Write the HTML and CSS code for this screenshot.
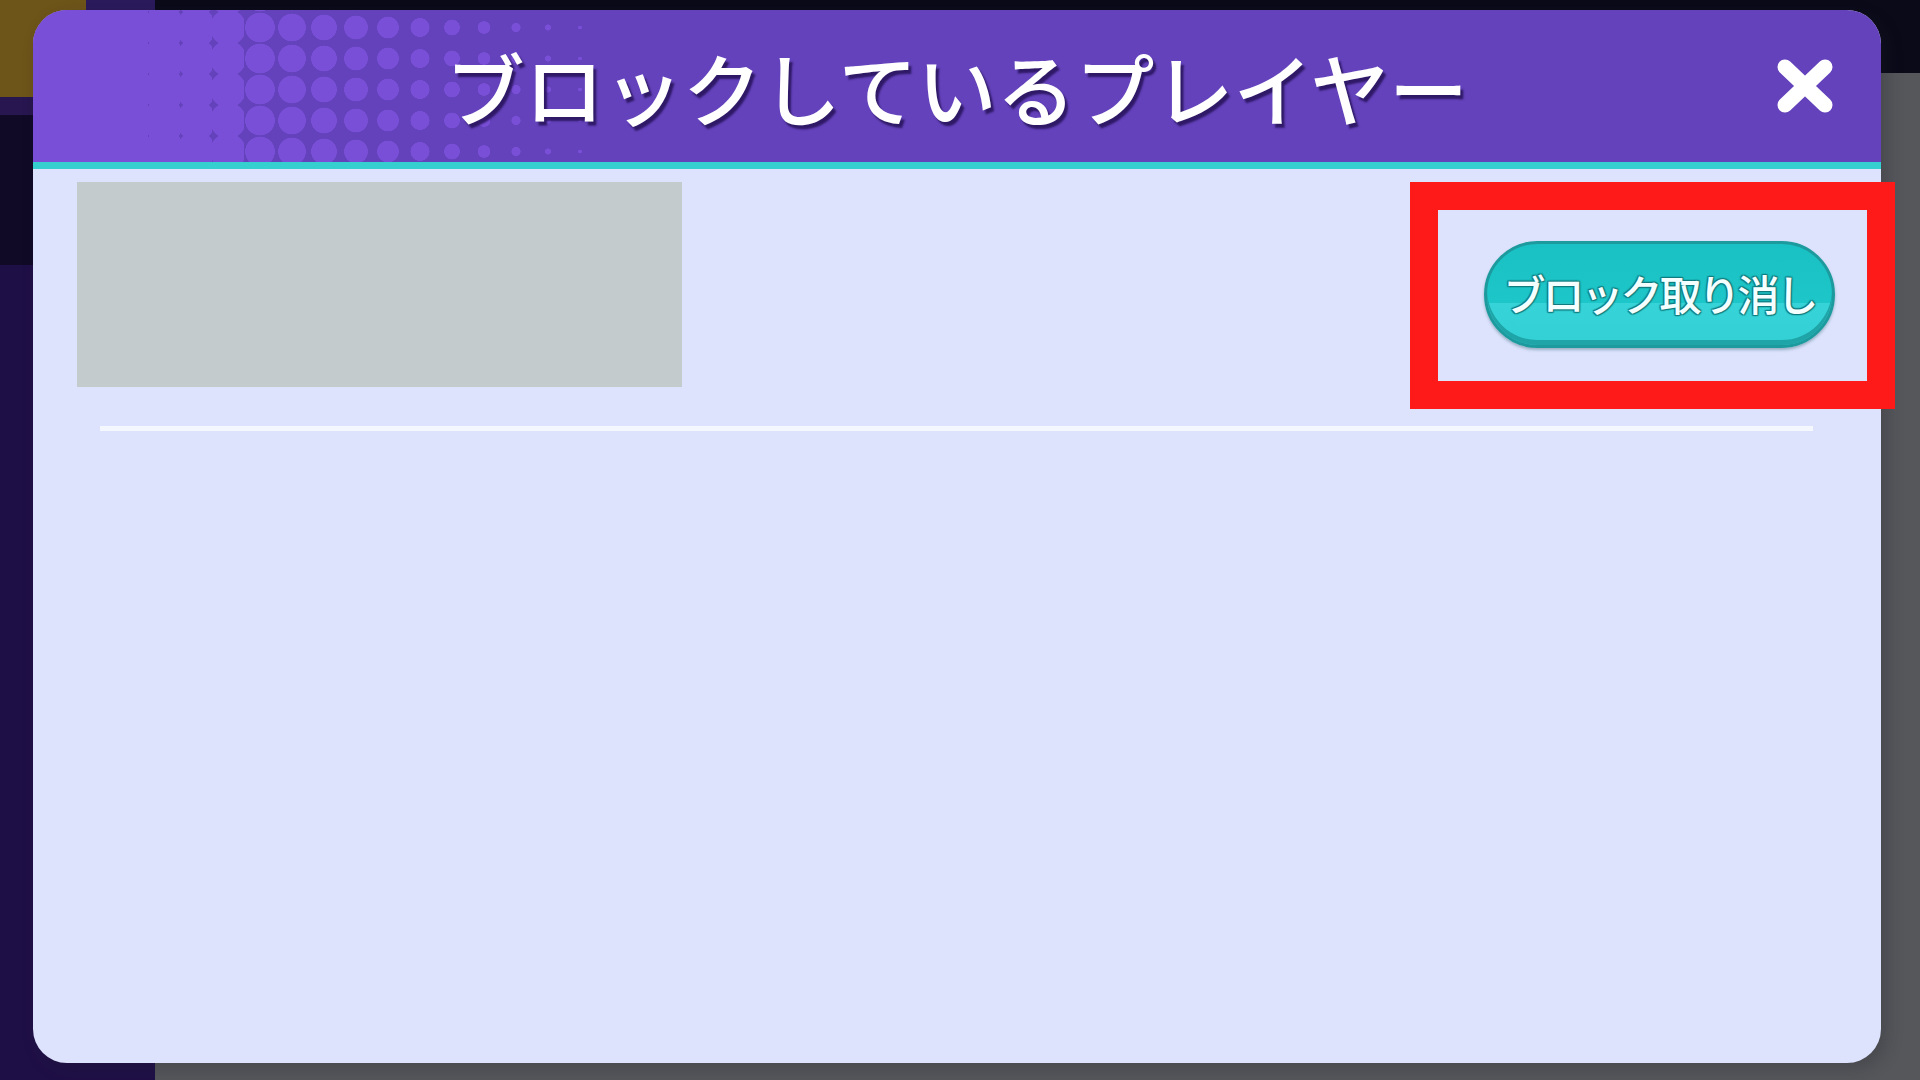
FILE: index.html
```html
<!DOCTYPE html>
<html lang="ja">
<head>
<meta charset="utf-8">
<title>ブロックしているプレイヤー</title>
<link rel="stylesheet" href="styles.css">
</head>
<body>
  <div class="modal">
    <header class="modal-header">
      <span class="spacer"></span>
      <h1 class="title">ブロックしているプレイヤー</h1>
      <button class="close" aria-label="閉じる">
        <svg viewBox="0 0 58 56" width="58" height="56" aria-hidden="true">
          <path d="M9 9 L49 47 M49 9 L9 47" stroke="#ffffff" stroke-width="15" stroke-linecap="round" fill="none"/>
        </svg>
      </button>
    </header>
    <div class="modal-body">
      <div class="row">
        <div class="avatar-placeholder"></div>
        <div class="action">
          <button class="unblock">ブロック取り消し</button>
          <span class="highlight"></span>
        </div>
      </div>
      <hr class="sep">
    </div>
  </div>
</body>
</html>
```

FILE: styles.css
```css
html, body {
  margin: 0;
}

body {
  width: 1920px;
  height: 1080px;
  box-sizing: border-box;
  padding: 10px 39px 17px 33px;
  overflow: hidden;
  font-family: "Noto Sans CJK JP", "Noto Sans", sans-serif;
  background:
    linear-gradient(#6d5419, #6d5419) 0 0 / 86px 97px no-repeat,
    linear-gradient(#2b1a5c, #2b1a5c) 86px 0 / 69px 10px no-repeat,
    linear-gradient(#27164f, #27164f) 0 97px / 155px 18px no-repeat,
    linear-gradient(#110a27, #110a27) 0 115px / 155px 150px no-repeat,
    linear-gradient(#1f0f47, #1f0f47) 0 265px / 155px 815px no-repeat,
    linear-gradient(#0b0a19, #0b0a19) 0 0 / 100% 73px no-repeat,
    #55575b;
}

.modal {
  height: 1053px;
  display: flex;
  flex-direction: column;
  border-radius: 34px;
  background: #dde3fd;
  box-shadow: 6px 6px 16px rgba(30, 30, 40, 0.25);
}

.modal-header {
  height: 152px;
  border-bottom: 7px solid #35cfd0;
  border-radius: 34px 34px 0 0;
  display: grid;
  grid-template-columns: 1fr auto 1fr;
  align-items: center;
  --dot: #7a4fd8;
  background:
    linear-gradient(var(--dot), var(--dot)) 0 0 / 51px 100% no-repeat,
    radial-gradient(circle at 16px 15.5px, var(--dot) 22.6px, transparent 23px) 51px 2px / 32px 31px repeat-y,
    radial-gradient(circle at 16px 15.5px, var(--dot) 21.8px, transparent 22.2px) 83px 2px / 32px 31px repeat-y,
    radial-gradient(circle at 16px 15.5px, var(--dot) 21px, transparent 21.5px) 115px 2px / 32px 31px repeat-y,
    radial-gradient(circle at 16px 15.5px, var(--dot) 19.8px, transparent 20.3px) 147px 2px / 32px 31px repeat-y,
    radial-gradient(circle at 16px 15.5px, var(--dot) 17.8px, transparent 18.3px) 179px 2px / 32px 31px repeat-y,
    radial-gradient(circle at 16px 15.5px, var(--dot) 14.6px, transparent 15.1px) 211px 2px / 32px 31px repeat-y,
    radial-gradient(circle at 16px 15.5px, var(--dot) 13.6px, transparent 14.1px) 243px 2px / 32px 31px repeat-y,
    radial-gradient(circle at 16px 15.5px, var(--dot) 12.6px, transparent 13.1px) 275px 2px / 32px 31px repeat-y,
    radial-gradient(circle at 16px 15.5px, var(--dot) 11.6px, transparent 12.1px) 307px 2px / 32px 31px repeat-y,
    radial-gradient(circle at 16px 15.5px, var(--dot) 10.6px, transparent 11.1px) 339px 2px / 32px 31px repeat-y,
    radial-gradient(circle at 16px 15.5px, var(--dot) 9.2px, transparent 9.7px) 371px 2px / 32px 31px repeat-y,
    radial-gradient(circle at 16px 15.5px, var(--dot) 7.6px, transparent 8.1px) 403px 2px / 32px 31px repeat-y,
    radial-gradient(circle at 16px 15.5px, var(--dot) 6px, transparent 6.5px) 435px 2px / 32px 31px repeat-y,
    radial-gradient(circle at 16px 15.5px, var(--dot) 4.3px, transparent 4.8px) 467px 2px / 32px 31px repeat-y,
    radial-gradient(circle at 16px 15.5px, var(--dot) 2.8px, transparent 3.3px) 499px 2px / 32px 31px repeat-y,
    radial-gradient(circle at 16px 15.5px, var(--dot) 1.6px, transparent 2.1px) 531px 2px / 32px 31px repeat-y,
    #6442bb;
}

.title {
  margin: 0;
  font-size: 79px;
  font-weight: 500;
  line-height: 1;
  color: #ffffff;
  white-space: nowrap;
  text-shadow: 3px 4px 2px rgba(38, 18, 88, 0.85);
}

.close {
  justify-self: end;
  margin-right: 47px;
  width: 58px;
  height: 56px;
  padding: 0;
  border: 0;
  background: none;
  display: flex;
}

.modal-body {
  flex: 1;
  padding: 13px 46px 0 44px;
}

.row {
  display: flex;
  justify-content: space-between;
  align-items: flex-start;
}

.avatar-placeholder {
  width: 605px;
  height: 205px;
  background: #c3cbcc;
}

.action {
  position: relative;
  margin-top: 59px;
}

.unblock {
  display: block;
  box-sizing: border-box;
  width: 351px;
  height: 107px;
  padding: 0 0 4px;
  border: 3px solid #1d9a9d;
  border-radius: 54px;
  background: linear-gradient(to bottom, #1ac1c4 0%, #1dc6c8 58%, #36d4d8 58%, #33d1d5 100%);
  box-shadow: inset 0 -5px 0 #1fa5a8, 0 2px 3px rgba(20, 80, 90, 0.35);
  font-family: "Noto Sans CJK JP", sans-serif;
  font-size: 42px;
  font-weight: 500;
  letter-spacing: -3px;
  color: #f4ffff;
  text-shadow:
    0 0 2px #117c7f,
    1px 1px 1px #117c7f,
    -1px -1px 1px #117c7f,
    1px -1px 1px #117c7f,
    -1px 1px 1px #117c7f;
  white-space: nowrap;
}

.highlight {
  position: absolute;
  top: -59px;
  left: -74px;
  right: -60px;
  bottom: -61px;
  border: 28px solid #ff1a1a;
  pointer-events: none;
}

.sep {
  margin: 39px 22px 0 23px;
  height: 5px;
  border: 0;
  background: #f5f7ff;
}
```
